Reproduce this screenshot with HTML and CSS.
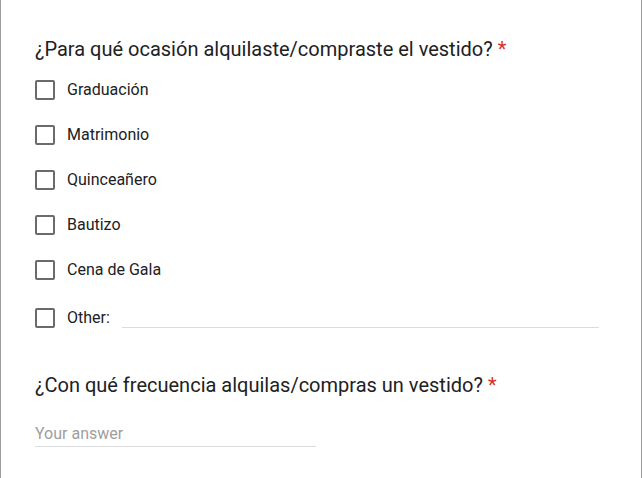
FILE: index.html
```html
<!DOCTYPE html>
<html>
<head>
<meta charset="utf-8">
<link rel="stylesheet" href="styles.css">
</head>
<body>
<div class="card">
  <div class="question">
    <div class="q-title">¿Para qué ocasión alquilaste/compraste el vestido? <span class="req">*</span></div>
    <div class="options">
      <label class="opt"><span class="box"></span><span class="opt-text">Graduación</span></label>
      <label class="opt"><span class="box"></span><span class="opt-text">Matrimonio</span></label>
      <label class="opt"><span class="box"></span><span class="opt-text">Quinceañero</span></label>
      <label class="opt"><span class="box"></span><span class="opt-text">Bautizo</span></label>
      <label class="opt"><span class="box"></span><span class="opt-text">Cena de Gala</span></label>
      <label class="opt other"><span class="box"></span><span class="opt-text">Other:</span><span class="other-line"></span></label>
    </div>
  </div>
  <div class="question second">
    <div class="q-title">¿Con qué frecuencia alquilas/compras un vestido? <span class="req">*</span></div>
    <div class="answer">Your answer</div>
  </div>
</div>
</body>
</html>
```

FILE: styles.css
```css
html, body {
  margin: 0;
  padding: 0;
  background: #ffffff;
}
.card {
  box-sizing: border-box;
  width: 642px;
  height: 478px;
  border-left: 1px solid #9e9e9e;
  border-right: 1px solid #9e9e9e;
  padding: 37px 0 0 34px;
  font-family: Roboto, "Liberation Sans", sans-serif;
  color: #202124;
}
.q-title {
  font-size: 20px;
  line-height: 24px;
  color: #202124;
}
.req {
  color: #d93025;
}
.options {
  display: flex;
  flex-direction: column;
  margin-top: 6px;
}
.opt {
  display: flex;
  align-items: center;
  height: 45px;
}
.opt.other {
  height: 51px;
}
.box {
  box-sizing: border-box;
  width: 20px;
  height: 20px;
  border: 2px solid #6b6b6b;
  border-radius: 2px;
  flex: none;
}
.opt-text {
  margin-left: 12px;
  font-size: 16px;
  color: #202124;
}
.other-line {
  flex: 1;
  height: 1px;
  background: #dadce0;
  margin: 0 42px 15px 12px;
  align-self: flex-end;
}
.second {
  margin-top: 30px;
}
.answer {
  margin-top: 27px;
  width: 281px;
  font-size: 16px;
  line-height: 19px;
  color: #9e9e9e;
  padding-bottom: 3px;
  border-bottom: 1px solid #dadce0;
}
```
